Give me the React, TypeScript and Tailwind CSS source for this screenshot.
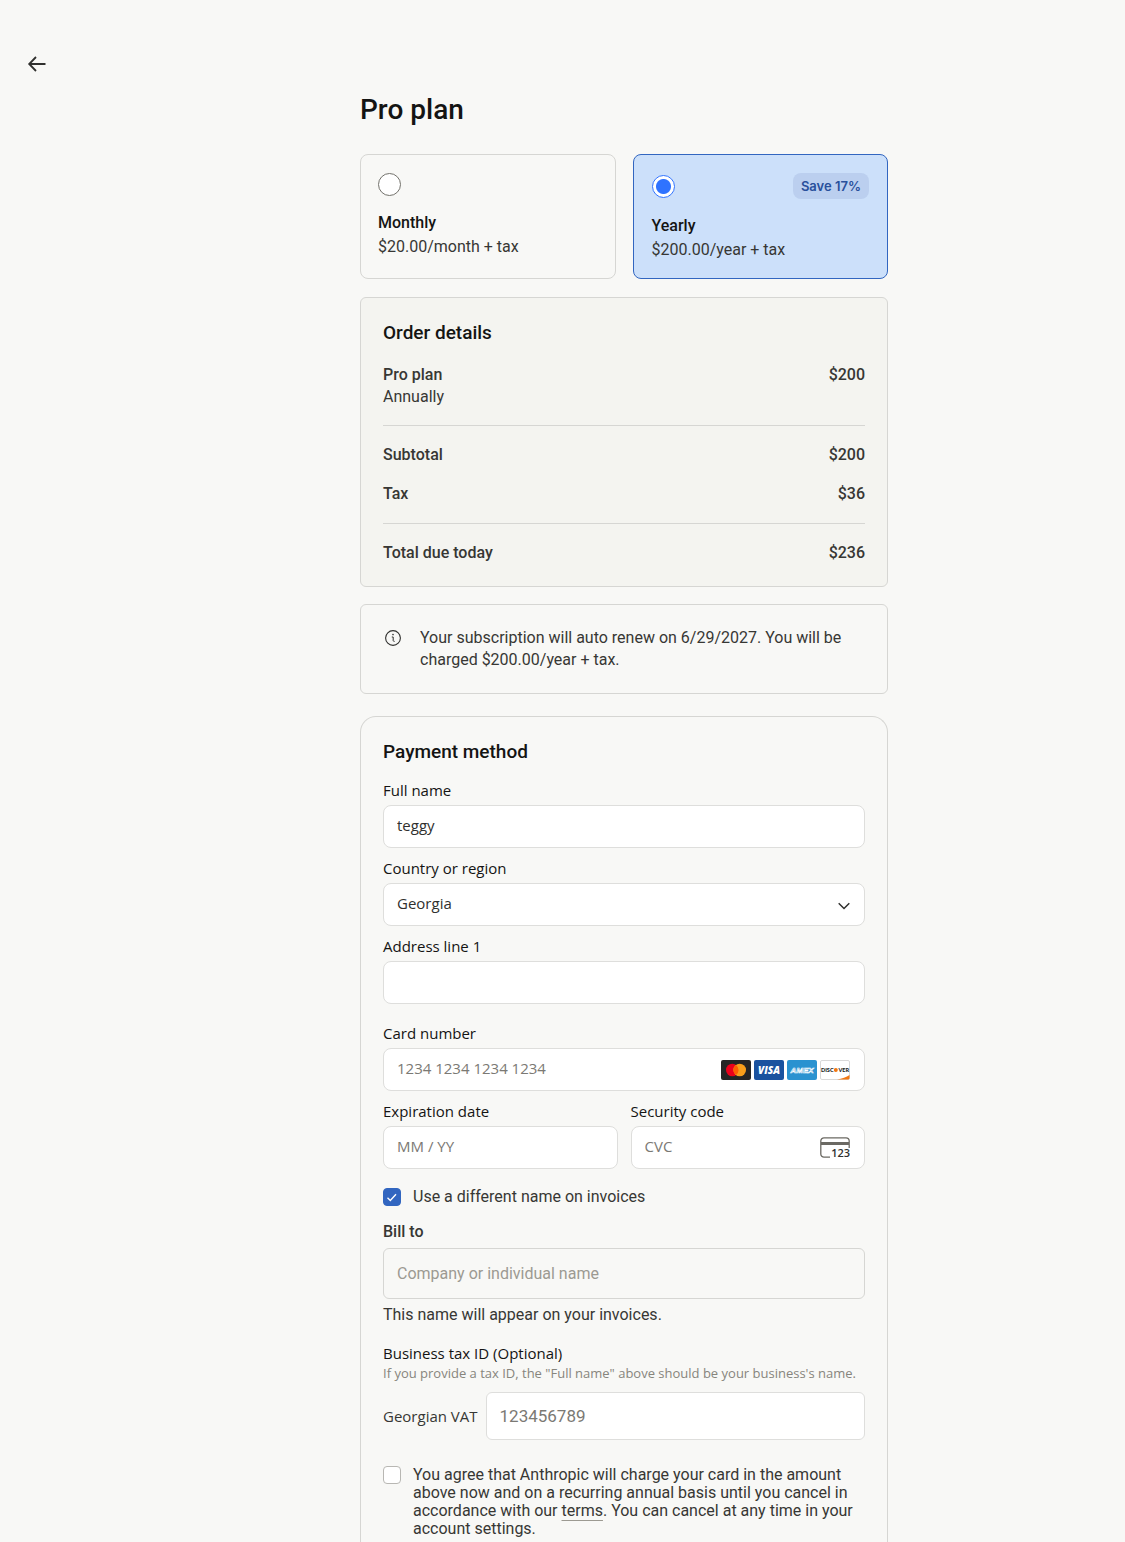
import { useState } from "react";
import type { ReactNode } from "react";

const fieldClass =
  "w-full h-[43px] rounded-lg border border-[#dededc] bg-white px-[13px] pb-1 font-['Open_Sans',sans-serif] text-[15px] text-[#30302e] placeholder:text-[#7b7974]";
const labelClass =
  "block mb-[5px] font-['Open_Sans',sans-serif] text-[15px] leading-5 text-[#141413]";
const radioClass =
  "block size-[23px] appearance-none rounded-full border border-[#73726c] bg-white checked:border-[#2f73ff] checked:bg-[radial-gradient(circle,#2f73ff_7px,white_8px)]";

const ArrowLeft = () => (
  <svg width="20" height="20" viewBox="0 0 20 20" fill="none" stroke="#30302e" strokeWidth="1.8">
    <path d="M18.5 10H2.5M9 3L2.2 10L9 17" />
  </svg>
);

const InfoIcon = () => (
  <svg className="mt-[3px] shrink-0" width="16" height="16" viewBox="0 0 16 16" fill="none" stroke="#30302e">
    <circle cx="8" cy="8" r="7.4" strokeWidth="1.1" />
    <path d="M6.8 7H8.2V10.6Q8.2 11.4 9.6 11.4" strokeWidth="1" />
    <circle cx="8" cy="4.6" r="0.8" fill="#30302e" stroke="none" />
  </svg>
);

const Mastercard = () => (
  <svg width="30" height="20" viewBox="0 0 30 20">
    <rect width="30" height="20" rx="2" fill="#252525" />
    <circle cx="11.3" cy="10" r="6.3" fill="#eb001b" />
    <circle cx="18.7" cy="10" r="6.3" fill="#f79e1b" />
    <path d="M15 4.9a6.3 6.3 0 0 1 0 10.2a6.3 6.3 0 0 1 0-10.2z" fill="#ff5f00" />
  </svg>
);

const Visa = () => (
  <svg width="30" height="20" viewBox="0 0 30 20">
    <rect width="30" height="20" rx="2" fill="#1a529f" />
    <text x="15" y="14" textAnchor="middle" fill="#fff" fontFamily="Open Sans, sans-serif" fontSize="10" fontWeight="800" fontStyle="italic">
      VISA
    </text>
  </svg>
);

const Amex = () => (
  <svg width="30" height="20" viewBox="0 0 30 20">
    <rect width="30" height="20" rx="2" fill="#2a92d0" />
    <text x="15" y="13" textAnchor="middle" fill="#2a92d0" stroke="#fff" strokeWidth="0.6" fontFamily="Liberation Sans, sans-serif" fontSize="8" fontWeight="700" fontStyle="italic">
      AMEX
    </text>
  </svg>
);

const Discover = () => (
  <svg width="30" height="20" viewBox="0 0 30 20">
    <rect x="0.5" y="0.5" width="29" height="19" rx="1.5" fill="#fff" stroke="#d9d9d9" />
    <path d="M17 19.5C22 18.8 26.5 17 29.5 15V18a1.5 1.5 0 0 1-1.5 1.5z" fill="#f27712" />
    <g fill="#201d1c" fontFamily="Lato, sans-serif" fontSize="5.5" fontWeight="900">
      <text x="1" y="12">DISC</text>
      <text x="29" y="12" textAnchor="end">VER</text>
    </g>
    <circle cx="15.8" cy="10" r="2" fill="#f27712" />
  </svg>
);

const CvcIcon = () => (
  <svg width="30" height="22" viewBox="0 0 30 22">
    <path d="M10 20.2H4a3.2 3.2 0 0 1-3.2-3.2V4A3.2 3.2 0 0 1 4 .8h22A3.2 3.2 0 0 1 29.2 4v7" fill="none" stroke="#6b6963" strokeWidth="1.3" />
    <rect x="1" y="5" width="28" height="3" fill="#6b6963" />
    <text x="30" y="20" textAnchor="end" fill="#30302e" fontFamily="Open Sans, sans-serif" fontSize="11" fontWeight="600">
      123
    </text>
  </svg>
);

const Row = ({ name, price }: { name: string; price: string }) => (
  <div className="flex justify-between font-medium">
    <span>{name}</span>
    <span>{price}</span>
  </div>
);

const Field = ({ id, label, children }: { id: string; label: string; children: ReactNode }) => (
  <div>
    <label htmlFor={id} className={labelClass}>
      {label}
    </label>
    <div className="relative">{children}</div>
  </div>
);

const Check = ({ id, checked, onChange }: { id: string; checked: boolean; onChange: () => void }) => (
  <span className="relative size-[18px] shrink-0">
    <input
      id={id}
      type="checkbox"
      checked={checked}
      onChange={onChange}
      className="block size-[18px] appearance-none rounded border border-[#b8b7b3] bg-white checked:border-[#3266c0] checked:bg-[#3266c0]"
    />
    {checked && (
      <svg className="pointer-events-none absolute inset-0" width="18" height="18" viewBox="0 0 18 18" fill="none" stroke="#fff" strokeWidth="1.4">
        <path d="M4.5 9.8L7.3 12.4L13 6.3" />
      </svg>
    )}
  </span>
);

const App = () => {
  const [plan, setPlan] = useState("yearly");
  const [otherName, setOtherName] = useState(true);
  const [agreed, setAgreed] = useState(false);

  return (
    <div className="flex min-h-screen bg-[#f8f8f6] font-[Roboto,sans-serif] text-base leading-[22px] text-[#373734]">
      <div className="w-[123px] shrink-0 pt-[54px] pl-[27px]">
        <button type="button" aria-label="Back" className="block">
          <ArrowLeft />
        </button>
      </div>

      <main className="flex flex-1 justify-center">
        <div className="flex w-full max-w-[528px] flex-col pt-[92px]">
          <h1 className="mb-[26px] text-[28px] leading-9 font-medium text-[#141413]">Pro plan</h1>

          <div className="mb-[18px] grid grid-cols-2 gap-[17px] leading-6">
            <label className="block rounded-lg border border-[#d6d6d3] p-[17px]">
              <span className="flex h-6 items-center">
                <input type="radio" name="plan" className={radioClass} checked={plan === "monthly"} onChange={() => setPlan("monthly")} />
              </span>
              <span className="mt-[15px] block font-medium text-[#141413]">Monthly</span>
              <span className="block">$20.00/month + tax</span>
            </label>
            <label className="block rounded-lg border border-[#3266c0] bg-[#cce0fa] p-[18px] pb-4">
              <span className="flex h-[26px] items-center justify-between">
                <input type="radio" name="plan" className={radioClass} checked={plan === "yearly"} onChange={() => setPlan("yearly")} />
                <span className="rounded-lg bg-[#bbcfef] px-2 font-[Inter,sans-serif] text-[13px] leading-[26px] font-semibold text-[#29509c]">
                  Save 17%
                </span>
              </span>
              <span className="mt-[15px] block font-medium text-[#141413]">Yearly</span>
              <span className="block">$200.00/year + tax</span>
            </label>
          </div>

          <section className="mb-[17px] rounded-md border border-[#d6d6d3] bg-[#f4f4f0] px-[22px] pt-[23px] pb-[22px]">
            <h2 className="mb-[19px] text-[19px] leading-6 font-medium text-[#141413]">Order details</h2>
            <Row name="Pro plan" price="$200" />
            <p>Annually</p>
            <hr className="mt-[17px] mb-[18px] border-[#d6d6d3]" />
            <div className="flex flex-col gap-[17px]">
              <Row name="Subtotal" price="$200" />
              <Row name="Tax" price="$36" />
            </div>
            <hr className="my-[18px] border-[#d6d6d3]" />
            <Row name="Total due today" price="$236" />
          </section>

          <section className="mb-[22px] flex gap-[19px] rounded-md border border-[#d6d6d3] px-6 py-[22px]">
            <InfoIcon />
            <p>
              Your subscription will auto renew on 6/29/2027. You will be charged $200.00/year + tax.
            </p>
          </section>

          <section className="flex-1 rounded-t-2xl border border-b-0 border-[#d6d6d3] px-[22px] pt-[23px]">
            <h2 className="mb-4 text-[19px] leading-6 font-medium text-[#141413]">Payment method</h2>

            <div className="flex flex-col gap-2.5">
              <Field id="name" label="Full name">
                <input id="name" className={fieldClass} defaultValue="teggy" />
              </Field>
              <Field id="country" label="Country or region">
                <select id="country" className={fieldClass + " appearance-none"}>
                  <option>Georgia</option>
                </select>
                <svg className="pointer-events-none absolute top-[19px] right-[15px]" width="12" height="8" viewBox="0 0 12 8" fill="none" stroke="#30302e" strokeWidth="1.5">
                  <path d="M0.7 1.2L6 6.5L11.3 1.2" />
                </svg>
              </Field>
              <Field id="address" label="Address line 1">
                <input id="address" className={fieldClass} />
              </Field>
            </div>

            <div className="mt-[19px] flex flex-col gap-2.5">
              <Field id="card" label="Card number">
                <input id="card" className={fieldClass} placeholder="1234 1234 1234 1234" />
                <div className="pointer-events-none absolute top-3 right-[15px] flex gap-[3px]">
                  <Mastercard />
                  <Visa />
                  <Amex />
                  <Discover />
                </div>
              </Field>
              <div className="grid grid-cols-2 gap-[13px]">
                <Field id="expiry" label="Expiration date">
                  <input id="expiry" className={fieldClass} placeholder="MM / YY" />
                </Field>
                <Field id="cvc" label="Security code">
                  <input id="cvc" className={fieldClass} placeholder="CVC" />
                  <div className="pointer-events-none absolute top-[11px] right-[15px]">
                    <CvcIcon />
                  </div>
                </Field>
              </div>
            </div>

            <div className="mt-[17px] flex items-center gap-3">
              <Check id="otherName" checked={otherName} onChange={() => setOtherName(!otherName)} />
              <label htmlFor="otherName">Use a different name on invoices</label>
            </div>

            <label htmlFor="billTo" className="mt-[13px] mb-[5px] block font-medium">
              Bill to
            </label>
            <input
              id="billTo"
              className="block h-[51px] w-full rounded-md border border-[#d6d6d3] px-[13px] placeholder:text-[#9c9a92]"
              placeholder="Company or individual name"
            />
            <p className="mt-[5px]">This name will appear on your invoices.</p>

            <div className="mt-[17px] font-['Open_Sans',sans-serif]">
              <p className="text-[15px] leading-5 text-[#141413]">Business tax ID (Optional)</p>
              <p className="text-[13px] leading-5 text-[#87857d]">
                If you provide a tax ID, the "Full name" above should be your business's name.
              </p>
              <div className="mt-[9px] flex items-center gap-2">
                <label htmlFor="vat" className="shrink-0 text-[15px]">
                  Georgian VAT
                </label>
                <input
                  id="vat"
                  className="h-12 min-w-0 flex-1 rounded-md border border-[#dededc] bg-white px-[13px] font-[Roboto,sans-serif] text-[17px] placeholder:text-[#7b7974]"
                  placeholder="123456789"
                />
              </div>
            </div>

            <div className="mt-[26px] flex items-start gap-3 leading-[18px]">
              <Check id="agree" checked={agreed} onChange={() => setAgreed(!agreed)} />
              <label htmlFor="agree">
                You agree that Anthropic will charge your card in the amount above now and on a recurring annual
                basis until you cancel in accordance with our{" "}
                <a href="#" className="underline decoration-[#9c9a92] decoration-1 underline-offset-4">
                  terms
                </a>
                . You can cancel at any time in your account settings.
              </label>
            </div>
          </section>
        </div>
      </main>
    </div>
  );
};

export default App;
